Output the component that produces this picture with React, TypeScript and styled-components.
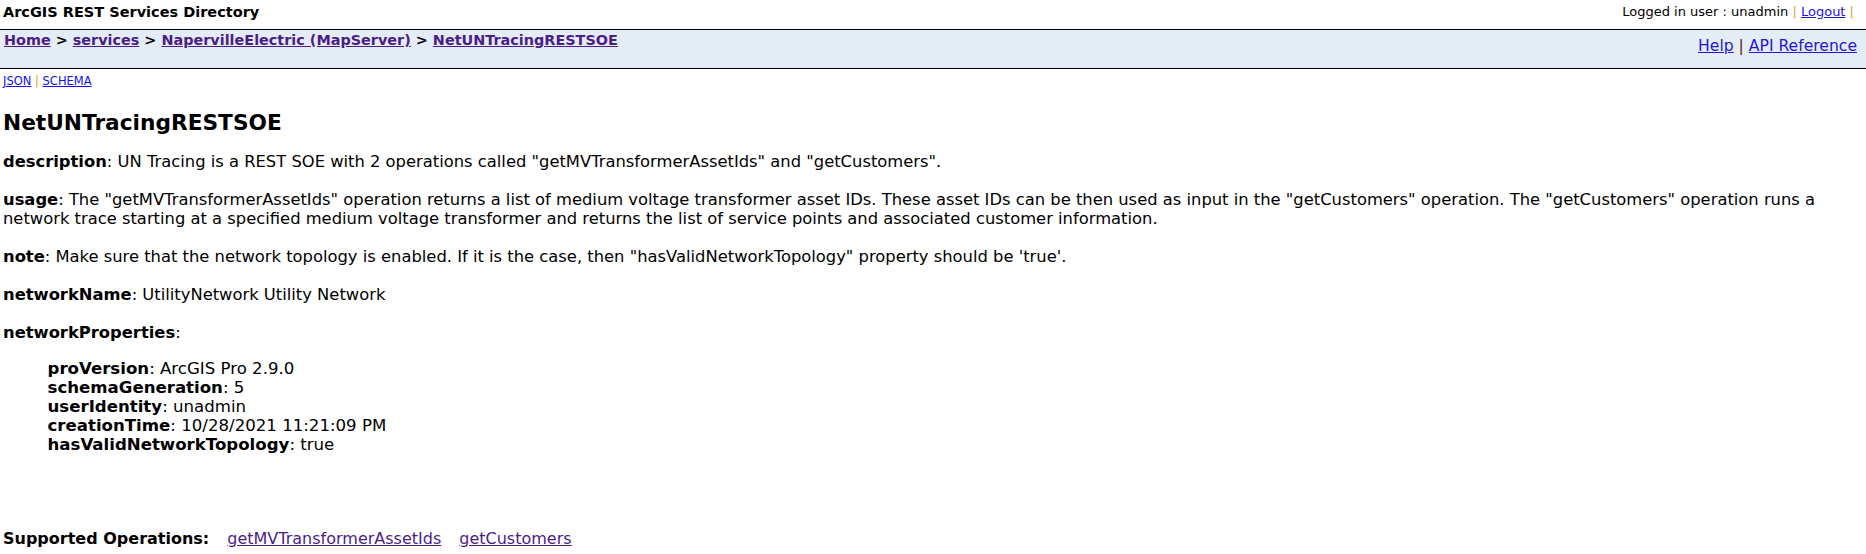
import React from 'react';
import styled, { createGlobalStyle } from 'styled-components';

const PROPERTIES = [
  { name: 'proVersion', value: 'ArcGIS Pro 2.9.0' },
  { name: 'schemaGeneration', value: '5' },
  { name: 'userIdentity', value: 'unadmin' },
  { name: 'creationTime', value: '10/28/2021 11:21:09 PM' },
  { name: 'hasValidNetworkTopology', value: 'true' },
];

const OPERATIONS = ['getMVTransformerAssetIds', 'getCustomers'];

const App = () => {
  return (
    <>
      <GlobalStyle />
      <UserBar>
        <Title>ArcGIS REST Services Directory</Title>
        <UserInfo>
          Logged in user : unadmin <Sep>|</Sep> <BlueLink href="#">Logout</BlueLink> <Sep>|</Sep>
        </UserInfo>
      </UserBar>
      <NavBar>
        <Breadcrumbs>
          <Crumb href="#">Home</Crumb> &gt; <Crumb href="#">services</Crumb> &gt;{' '}
          <Crumb href="#">NapervilleElectric (MapServer)</Crumb> &gt;{' '}
          <Crumb href="#">NetUNTracingRESTSOE</Crumb>
        </Breadcrumbs>
        <ApiRef>
          <BlueLink href="#">Help</BlueLink> <Sep color="#5c1722">|</Sep>{' '}
          <BlueLink href="#">API Reference</BlueLink>
        </ApiRef>
      </NavBar>
      <Content>
        <FormatLinks>
          <FormatLink href="#">JSON</FormatLink> <Sep>|</Sep> <FormatLink href="#">SCHEMA</FormatLink>
        </FormatLinks>
        <Heading>NetUNTracingRESTSOE</Heading>
        <Field>
          <b>description</b>: UN Tracing is a REST SOE with 2 operations called
          "getMVTransformerAssetIds" and "getCustomers".
        </Field>
        <Field>
          <b>usage</b>: The "getMVTransformerAssetIds" operation returns a list of medium voltage
          transformer asset IDs. These asset IDs can be then used as input in the "getCustomers"
          operation. The "getCustomers" operation runs a network trace starting at a specified medium
          voltage transformer and returns the list of service points and associated customer
          information.
        </Field>
        <Field>
          <b>note</b>: Make sure that the network topology is enabled. If it is the case, then
          "hasValidNetworkTopology" property should be 'true'.
        </Field>
        <Field>
          <b>networkName</b>: UtilityNetwork Utility Network
        </Field>
        <Field $last>
          <b>networkProperties</b>:
        </Field>
        <PropList>
          {PROPERTIES.map((prop) => (
            <li key={prop.name}>
              <b>{prop.name}</b>: {prop.value}
            </li>
          ))}
        </PropList>
        <Operations>
          <b>Supported Operations:</b>
          {OPERATIONS.map((op) => (
            <OpLink key={op} href="#">
              {op}
            </OpLink>
          ))}
        </Operations>
      </Content>
    </>
  );
};

export default App;

const GlobalStyle = createGlobalStyle`
  body {
    margin: 0;
    background: #fff;
    color: #000;
    font-family: 'DejaVu Sans', Verdana, sans-serif;
    font-size: 16px;
  }
`;

const UserBar = styled.div`
  display: flex;
  justify-content: space-between;
  align-items: flex-start;
  height: 29px;
  padding: 3px 12px 0 3px;
  box-sizing: border-box;
`;

const Title = styled.div`
  font-size: 14.5px;
  font-weight: bold;
  line-height: 18px;
`;

const UserInfo = styled.div`
  font-size: 13px;
  line-height: 18px;
`;

const Sep = styled.span<{ color?: string }>`
  color: ${(props) => props.color || '#e39b3b'};
`;

const BlueLink = styled.a`
  color: #2415d6;
  text-decoration: underline;
`;

const NavBar = styled.div`
  display: flex;
  justify-content: space-between;
  height: 40px;
  box-sizing: border-box;
  background: #e4edf6;
  border-top: 1px solid #000;
  border-bottom: 1px solid #000;
  padding: 0 9px 0 4px;
`;

const Breadcrumbs = styled.div`
  font-size: 14.4px;
  font-weight: bold;
  padding-top: 2px;
`;

const Crumb = styled.a`
  color: #4d1d86;
  text-decoration: underline;
`;

const ApiRef = styled.div`
  font-size: 15.6px;
  padding-top: 7px;
`;

const Content = styled.div`
  padding: 0 3px;
`;

const FormatLinks = styled.div`
  font-size: 11.5px;
  margin-top: 5px;
`;

const FormatLink = styled.a`
  color: #1010f0;
  text-decoration: underline;
`;

const Heading = styled.h2`
  font-size: 21.7px;
  font-weight: bold;
  line-height: 25px;
  margin: 22px 0 17px;
`;

const Field = styled.div<{ $last?: boolean }>`
  font-size: 16.35px;
  line-height: 19px;
  margin-bottom: ${(props) => (props.$last ? '0' : '19px')};
`;

const PropList = styled.ul`
  list-style: none;
  margin: 17px 0 0;
  padding-left: 44.5px;
  font-size: 16.6px;
  line-height: 19px;
`;

const Operations = styled.div`
  display: flex;
  gap: 18px;
  margin-top: 75px;
  line-height: 19px;
`;

const OpLink = styled.a`
  color: #4d1d86;
  text-decoration: underline;
`;
